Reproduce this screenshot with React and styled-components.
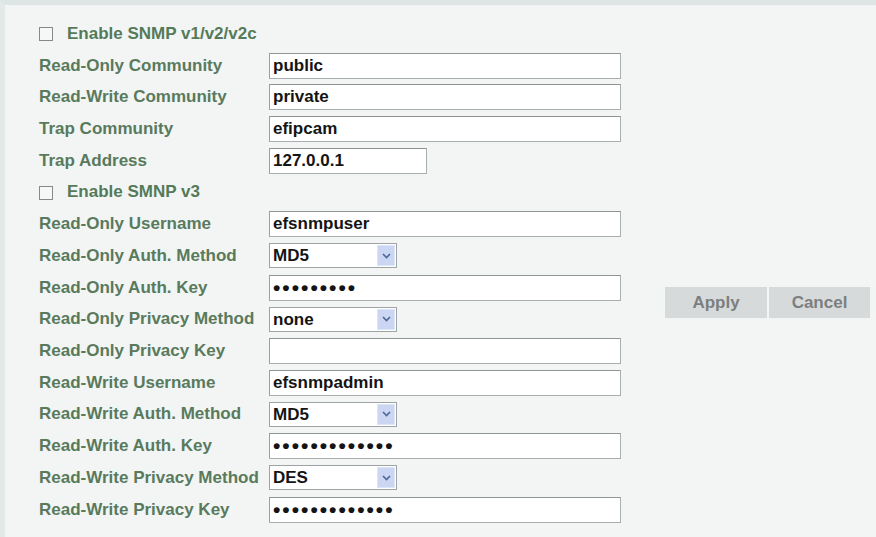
import React from "react";
import styled, { createGlobalStyle } from "styled-components";

const Global = createGlobalStyle`
  html, body { margin: 0; padding: 0; }
  body { background: #f2f5f4; font-family: "Liberation Sans", Arial, sans-serif; }
`;

const Page = styled.div`
  box-sizing: border-box;
  width: 876px;
  height: 537px;
  overflow: hidden;
  background: #f2f5f4;
  border-top: 5px solid #dde6e4;
  border-left: 5px solid #e2e9e7;
  display: flex;
  align-items: flex-start;
  padding: 13px 0 0 34px;
`;

const Form = styled.div`
  display: grid;
  grid-template-columns: 230px 352px;
  grid-auto-rows: 31.73px;
  align-items: center;
`;

const Label = styled.div`
  font: bold 17px "Liberation Sans", Arial, sans-serif;
  color: #597a5c;
  white-space: nowrap;
`;

const CheckRow = styled.label`
  grid-column: 1 / -1;
  display: flex;
  align-items: center;
  gap: 14px;
  font: bold 17px "Liberation Sans", Arial, sans-serif;
  color: #557a59;
`;

const Box = styled.span`
  flex: none;
  box-sizing: border-box;
  width: 14px;
  height: 14px;
  border: 1px solid #858a87;
  background: #f6f7f7;
  margin-top: 1px;
`;

const Field = styled.input`
  box-sizing: border-box;
  width: ${(p) => p.$w || 352}px;
  height: 26px;
  margin: 0;
  padding: 0 3px;
  border: 1px solid #a9aeb1;
  border-top-color: #8f9497;
  border-left-color: #9a9fa2;
  background: #fff;
  font: bold ${(p) => (p.type === "password" ? "21px" : "17px")} "Liberation Sans", Arial, sans-serif;
  color: #141414;
  letter-spacing: ${(p) => (p.type === "password" ? "2px" : "0")};
  outline: none;
`;

const SelectWrap = styled.div`
  position: relative;
  width: 128px;
  height: 25px;
`;

const Select = styled.select`
  box-sizing: border-box;
  appearance: none;
  width: 128px;
  height: 25px;
  margin: 0;
  padding: 0 3px;
  border: 1px solid #9ea3a6;
  border-radius: 0;
  background: #fff;
  font: bold 17px "Liberation Sans", Arial, sans-serif;
  color: #141414;
  outline: none;
`;

const Arrow = styled.span`
  position: absolute;
  right: 2px;
  top: 2px;
  width: 18px;
  height: 21px;
  box-sizing: border-box;
  background: #cad6f2;
  border: 1px solid #dde5f8;
  display: flex;
  align-items: center;
  justify-content: center;
  pointer-events: none;
`;

const Actions = styled.div`
  display: flex;
  gap: 2px;
  margin: 269px 0 0 44px;
`;

const Button = styled.button`
  box-sizing: border-box;
  width: ${(p) => p.$w}px;
  height: 31px;
  border: none;
  background: #d7dada;
  color: #7c7f80;
  font: bold 17px "Liberation Sans", Arial, sans-serif;
  padding: 0;
  cursor: pointer;
`;

const Check = ({ children }) => (
  <CheckRow>
    <Box />
    {children}
  </CheckRow>
);

const Text = ({ label, value, type = "text", w }) => (
  <>
    <Label>{label}</Label>
    <div>
      <Field type={type} defaultValue={value} $w={w} readOnly />
    </div>
  </>
);

const Drop = ({ label, value, options }) => (
  <>
    <Label>{label}</Label>
    <SelectWrap>
      <Select defaultValue={value}>
        {options.map((o) => (
          <option key={o}>{o}</option>
        ))}
      </Select>
      <Arrow>
        <svg width="9" height="6" viewBox="0 0 9 6">
          <path d="M1 1 L4.5 4.5 L8 1" fill="none" stroke="#4f6697" strokeWidth="1.6" />
        </svg>
      </Arrow>
    </SelectWrap>
  </>
);

export default function App() {
  return (
    <>
      <Global />
      <Page>
        <Form>
          <Check>Enable SNMP v1/v2/v2c</Check>
          <Text label="Read-Only Community" value="public" />
          <Text label="Read-Write Community" value="private" />
          <Text label="Trap Community" value="efipcam" />
          <Text label="Trap Address" value="127.0.0.1" w={158} />
          <Check>Enable SMNP v3</Check>
          <Text label="Read-Only Username" value="efsnmpuser" />
          <Drop label="Read-Only Auth. Method" value="MD5" options={["MD5", "SHA"]} />
          <Text label="Read-Only Auth. Key" value="123456789" type="password" />
          <Drop label="Read-Only Privacy Method" value="none" options={["none", "DES"]} />
          <Text label="Read-Only Privacy Key" value="" />
          <Text label="Read-Write Username" value="efsnmpadmin" />
          <Drop label="Read-Write Auth. Method" value="MD5" options={["MD5", "SHA"]} />
          <Text label="Read-Write Auth. Key" value="1234567890123" type="password" />
          <Drop label="Read-Write Privacy Method" value="DES" options={["none", "DES"]} />
          <Text label="Read-Write Privacy Key" value="1234567890123" type="password" />
        </Form>
        <Actions>
          <Button $w={102}>Apply</Button>
          <Button $w={101}>Cancel</Button>
        </Actions>
      </Page>
    </>
  );
}
